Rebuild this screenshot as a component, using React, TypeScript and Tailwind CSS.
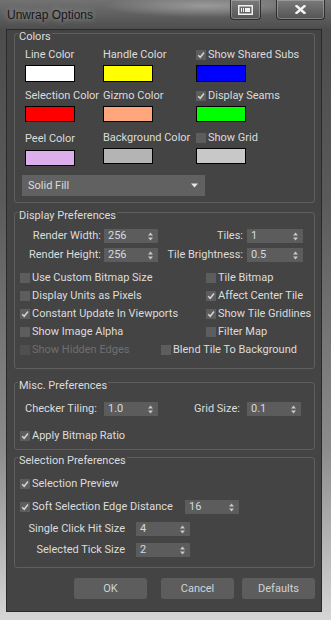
import React from 'react';

const font = "font-['Roboto','Liberation_Sans',sans-serif]";

const Check: React.FC<{ checked?: boolean; disabled?: boolean; label: string; short?: boolean; className?: string }> = ({
  checked,
  disabled,
  label,
  short,
  className = '',
}) => (
  <div className={`flex items-center ${short ? 'h-[14px]' : 'h-[18px]'} ${className}`}>
    <div
      className={`w-[10px] h-[10px] flex items-center justify-center shrink-0 ${
        disabled ? 'bg-[#4f4f4f]' : 'bg-[#5d5d5d]'
      }`}
    >
      {checked && (
        <svg width="8" height="8" viewBox="0 0 8 8">
          <path d="M1.2 4.2 L3.2 6.3 L7 1.6" fill="none" stroke="#d2d2d2" strokeWidth="1.6" />
        </svg>
      )}
    </div>
    <span className={`ml-[2px] whitespace-nowrap ${disabled ? 'text-[#6f6f6f]' : 'text-[#dcdcdc]'}`}>
      {label}
    </span>
  </div>
);

const Spinner: React.FC<{ value: string; className?: string }> = ({ value, className = '' }) => (
  <div className={`h-[14px] bg-[#5c5c5c] flex items-center justify-between pl-[4px] pr-[5px] ${className}`}>
    <span className="text-[#d4dae0] leading-[14px]">{value}</span>
    <svg width="5" height="9" viewBox="0 0 5 9">
      <path d="M2.5 0.5 L5 3.5 L0 3.5 Z" fill="#c8c8c8" />
      <path d="M0 5.5 L5 5.5 L2.5 8.5 Z" fill="#c8c8c8" />
    </svg>
  </div>
);

const Swatch: React.FC<{ color: string; tall?: boolean }> = ({ color, tall }) => (
  <div className={`w-[50px] ${tall ? 'h-[17px]' : 'h-[16px]'} border border-black ${color}`} />
);

const Group: React.FC<{ title: string; className?: string; children: React.ReactNode }> = ({
  title,
  className = '',
  children,
}) => (
  <div className={`border border-[#5f5f5f] rounded-[3px] ${className}`}>
    <div className="-mt-[4px] ml-[3px] px-[1px] w-fit h-[14px] leading-[14px] bg-[#444444] text-[#dcdcdc]">
      {title}
    </div>
    {children}
  </div>
);

const App: React.FC = () => {
  return (
    <div
      className={`w-[331px] h-[620px] overflow-hidden text-[11px] ${font} bg-[linear-gradient(180deg,#727272_0px,#4c4c4c_30px,#5a5a5a_200px,#8c8c8c_450px,#d6d6d6_620px)]`}
    >
      {/* title bar */}
      <div className="h-[29px] flex items-start bg-[radial-gradient(ellipse_at_62%_20%,#9a9a9a_0%,transparent_35%)]">
        <div className="pl-[7px] pt-[7px] leading-[16px] text-[12px] text-[#161616] font-['Liberation_Sans',sans-serif] [text-shadow:0_0_6px_rgba(255,255,255,0.55)]">
          Unwrap Options
        </div>
        <div className="flex-1" />
        <div className="w-[31px] h-[20px] border border-[#2e2e2e] border-t-0 rounded-b-[4px] bg-[linear-gradient(180deg,#7a7a7a,#565656)] shadow-[inset_0_0_0_1px_rgba(255,255,255,0.25)] flex items-center justify-center">
          <svg width="15" height="10" viewBox="0 0 15 10">
            <rect x="0.75" y="0.75" width="13.5" height="8.5" fill="none" stroke="#f0f0f0" strokeWidth="1.5" />
            <rect x="7" y="3" width="5" height="4" fill="#f0f0f0" />
            <line x1="3.5" y1="3" x2="3.5" y2="7" stroke="#f0f0f0" strokeWidth="1" />
            <line x1="5.5" y1="3" x2="5.5" y2="7" stroke="#f0f0f0" strokeWidth="1" />
          </svg>
        </div>
        <div className="ml-[15px] mr-[6px] w-[49px] h-[20px] border border-[#2e2e2e] border-t-0 rounded-b-[4px] bg-[linear-gradient(180deg,#7a7a7a,#545454)] shadow-[inset_0_0_0_1px_rgba(255,255,255,0.25)] flex items-center justify-center">
          <svg width="11" height="9" viewBox="0 0 11 9">
            <path d="M1.5 1 L9.5 8 M9.5 1 L1.5 8" stroke="#f4f4f4" strokeWidth="2.4" strokeLinecap="square" />
          </svg>
        </div>
      </div>

      {/* client area */}
      <div className="ml-[6px] w-[316px] h-[583px] bg-[#444444] border border-[#2a2a2a] pl-[7px] pr-[6px] pt-[3px] text-[#dcdcdc] leading-[14px]">
        {/* Colors */}
        <Group title="Colors" className="pb-[6px]">
          <div className="pl-[10px] grid grid-cols-[78px_93px_1fr]">
            {/* row 1 */}
            <div className="mt-[4px] flex flex-col">
              <span className="h-[14px]">Line Color</span>
              <div className="mt-[3px]"><Swatch color="bg-white" tall /></div>
            </div>
            <div className="mt-[4px] flex flex-col">
              <span className="h-[14px]">Handle Color</span>
              <div className="mt-[3px]"><Swatch color="bg-[#ffff00]" tall /></div>
            </div>
            <div className="mt-[4px] flex flex-col">
              <Check checked short label="Show Shared Subs" />
              <div className="mt-[3px]"><Swatch color="bg-[#0000ff]" tall /></div>
            </div>
            {/* row 2 */}
            <div className="mt-[7px] flex flex-col">
              <span className="h-[14px]">Selection Color</span>
              <div className="mt-[3px]"><Swatch color="bg-[#ff0000]" /></div>
            </div>
            <div className="mt-[7px] flex flex-col">
              <span className="h-[14px]">Gizmo Color</span>
              <div className="mt-[3px]"><Swatch color="bg-[#ffa77a]" /></div>
            </div>
            <div className="mt-[7px] flex flex-col">
              <Check checked short label="Display Seams" />
              <div className="mt-[3px]"><Swatch color="bg-[#00ff00]" /></div>
            </div>
            {/* row 3 */}
            <div className="mt-[10px] flex flex-col">
              <span className="h-[14px]">Peel Color</span>
              <div className="mt-[4px]"><Swatch color="bg-[#dcaeec]" /></div>
            </div>
            <div className="mt-[9px] flex flex-col">
              <span className="h-[14px]">Background Color</span>
              <div className="mt-[3px]"><Swatch color="bg-[#b4b4b4]" /></div>
            </div>
            <div className="mt-[9px] flex flex-col">
              <Check short label="Show Grid" />
              <div className="mt-[3px]"><Swatch color="bg-[#c8c8c8]" /></div>
            </div>
          </div>
          <div className="ml-[7px] mt-[9px] w-[183px] h-[21px] bg-[#616161] flex items-center justify-between pl-[6px] pr-[7px]">
            <span>Solid Fill</span>
            <svg width="7" height="5" viewBox="0 0 7 5">
              <path d="M0 0.5 L7 0.5 L3.5 4.5 Z" fill="#e6e6e6" />
            </svg>
          </div>
        </Group>

        {/* Display Preferences */}
        <Group title="Display Preferences" className="mt-[9px] pb-[9px]">
          <div className="mt-[6px] grid grid-cols-[86px_54px_83px_56px] gap-x-[3px] gap-y-[5px]">
            <span className="text-right h-[14px]">Render Width:</span>
            <Spinner value="256" />
            <span className="text-right h-[14px] pr-[1px]">Tiles:</span>
            <Spinner value="1" />
            <span className="text-right h-[14px]">Render Height:</span>
            <Spinner value="256" />
            <span className="text-right h-[14px] pr-[1px]">Tile Brightness:</span>
            <Spinner value="0.5" />
          </div>
          <div className="mt-[7px] pl-[5px] grid grid-cols-[186px_1fr]">
            <Check label="Use Custom Bitmap Size" />
            <Check label="Tile Bitmap" />
            <Check label="Display Units as Pixels" />
            <Check checked label="Affect Center Tile" />
            <Check checked label="Constant Update In Viewports" />
            <Check checked label="Show Tile Gridlines" />
            <Check label="Show Image Alpha" />
            <Check label="Filter Map" />
          </div>
          <div className="pl-[5px] flex">
            <Check disabled label="Show Hidden Edges" className="w-[141px]" />
            <Check label="Blend Tile To Background" />
          </div>
        </Group>

        {/* Misc. Preferences */}
        <Group title="Misc. Preferences" className="mt-[13px] pb-[4px]">
          <div className="mt-[9px] pl-[10px] flex items-center h-[14px]">
            <span className="w-[79px]">Checker Tiling:</span>
            <Spinner value="1.0" className="w-[54px]" />
            <span className="ml-[36px] w-[53px]">Grid Size:</span>
            <Spinner value="0.1" className="w-[54px]" />
          </div>
          <div className="mt-[11px] pl-[5px]">
            <Check checked label="Apply Bitmap Ratio" />
          </div>
        </Group>

        {/* Selection Preferences */}
        <Group title="Selection Preferences" className="mt-[7px] pb-[10px]">
          <div className="mt-[7px] pl-[5px]">
            <Check checked label="Selection Preview" />
          </div>
          <div className="mt-[5px] pl-[5px] flex items-center">
            <Check checked label="Soft Selection Edge Distance" className="w-[165px]" />
            <Spinner value="16" className="w-[54px]" />
          </div>
          <div className="mt-[6px] grid grid-cols-[110px_54px] gap-x-[11px] gap-y-[7px]">
            <span className="text-right h-[14px]">Single Click Hit Size</span>
            <Spinner value="4" />
            <span className="text-right h-[14px]">Selected Tick Size</span>
            <Spinner value="2" />
          </div>
        </Group>

        {/* buttons */}
        <div className="mt-[10px] ml-[60px] flex text-[#cfd3d8]">
          <button className="w-[74px] h-[21px] rounded-[3px] bg-[#5d5d5d]">OK</button>
          <button className="ml-[14px] w-[74px] h-[21px] rounded-[3px] bg-[#5d5d5d]">Cancel</button>
          <button className="ml-[8px] w-[74px] h-[21px] rounded-[3px] bg-[#5d5d5d]">Defaults</button>
        </div>
      </div>
    </div>
  );
};

export default App;
